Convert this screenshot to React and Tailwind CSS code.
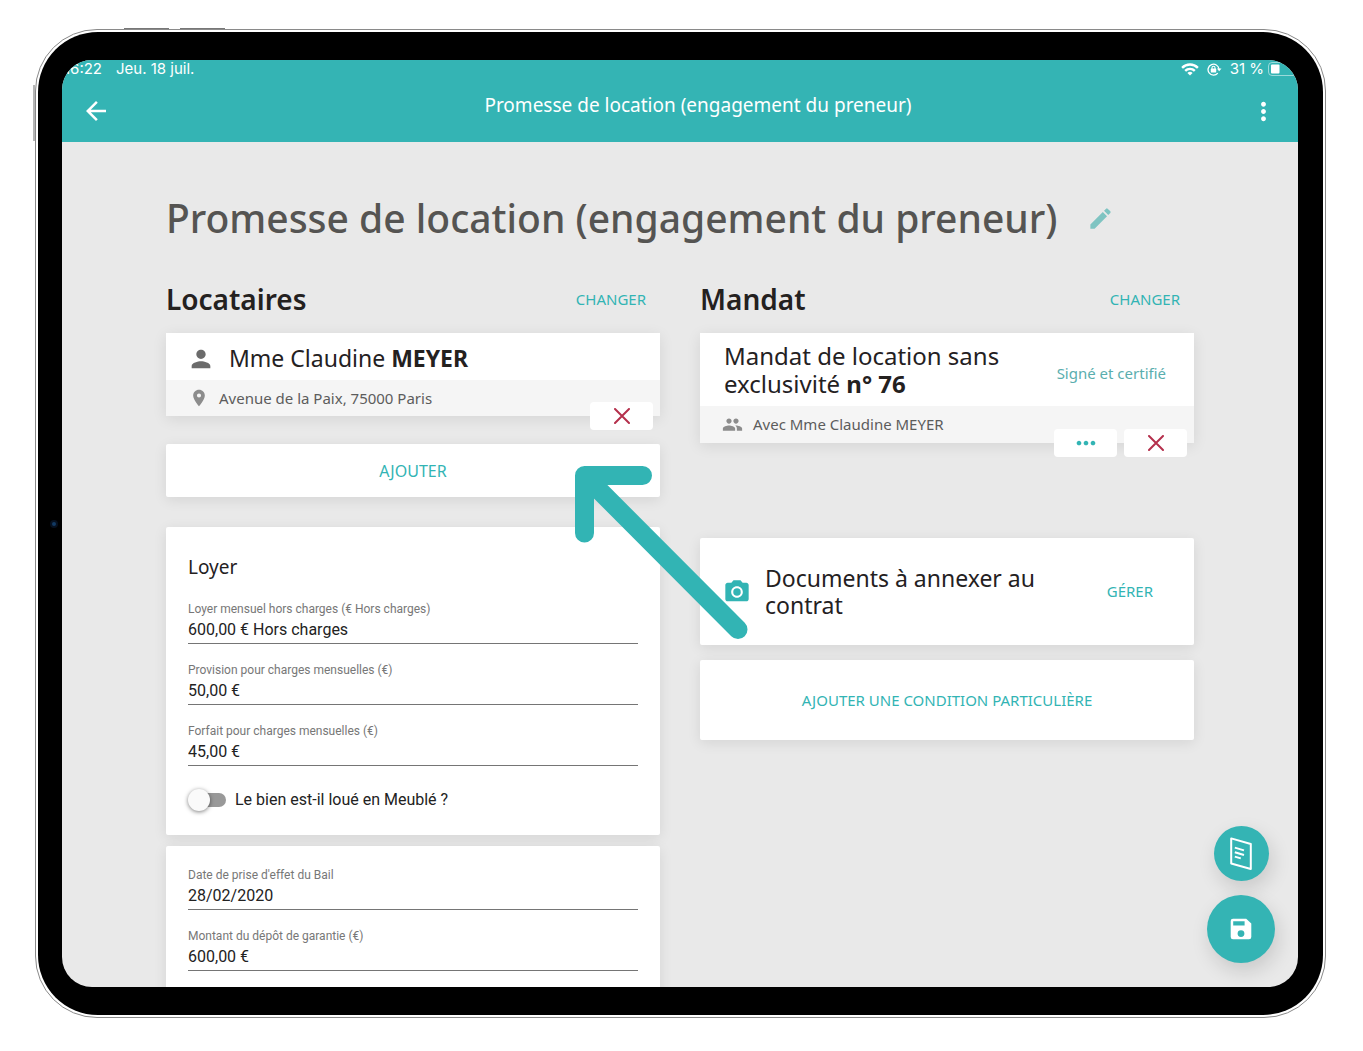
import React, { useState } from "react";
import {
  MdArrowBack,
  MdMoreVert,
  MdEdit,
  MdPerson,
  MdPlace,
  MdPeople,
  MdMoreHoriz,
  MdCameraAlt,
} from "react-icons/md";

const cardShadow = "shadow-[0_3px_14px_rgba(0,0,0,0.09)]";

function CrossIcon() {
  return (
    <svg width="16" height="16" viewBox="0 0 16 16" fill="none" stroke="#b5304c" strokeWidth="2" strokeLinecap="round" aria-hidden="true">
      <path d="M1 1 15 15M15 1 1 15" />
    </svg>
  );
}

function WifiIcon() {
  return (
    <svg width="18" height="13" viewBox="0 0 18 13" fill="none" stroke="#fff" strokeWidth="2.4" aria-hidden="true">
      <path d="M1.1 4.8a11.2 11.2 0 0 1 15.8 0" />
      <path d="M4.2 7.9a6.8 6.8 0 0 1 9.6 0" />
      <path d="M9 12.6 6.4 10a3.7 3.7 0 0 1 5.2 0Z" fill="#fff" stroke="none" />
    </svg>
  );
}

function RotationLockIcon() {
  return (
    <svg width="15" height="13" viewBox="0 0 15 13" fill="none" stroke="#fff" strokeWidth="1.3" aria-hidden="true">
      <path d="M10.8 10.2A5.5 5.5 0 1 1 12 6" />
      <path d="M9.9 5.4h4.6L12.2 8.2Z" fill="#fff" stroke="none" />
      <rect x="3.8" y="5.6" width="5.4" height="4" rx="0.6" fill="#fff" stroke="none" />
      <path d="M5 6V4.7a1.5 1.5 0 0 1 3 0V6" strokeWidth="1.1" />
    </svg>
  );
}

function BatteryIcon() {
  return (
    <svg width="30" height="14" viewBox="0 0 30 14" fill="none" aria-hidden="true">
      <rect x="0.5" y="0.5" width="28" height="13" rx="3.5" stroke="#fff" strokeOpacity="0.5" />
      <rect x="3" y="2.5" width="8.5" height="9" rx="1" fill="#fff" />
    </svg>
  );
}

function ContractIcon() {
  return (
    <svg width="22" height="34" viewBox="0 0 22 34" fill="none" stroke="#fff" strokeWidth="2" strokeLinejoin="round" aria-hidden="true">
      <path d="M1.2 1.4 20.8 7v25L1.2 26.5Z" />
      <path d="M4.8 10.6 14 13.4M4.8 15.2 14 18M4.8 19.6l6 1.8" />
    </svg>
  );
}

function SaveIcon() {
  return (
    <svg width="22" height="22" viewBox="0 0 22 22" fill="#fff" fillRule="evenodd" aria-hidden="true">
      <path d="M3 .7h13.2l5.1 4.8V19a2.3 2.3 0 0 1-2.3 2.3H3A2.3 2.3 0 0 1 .7 19V3A2.3 2.3 0 0 1 3 .7ZM3.2 3.2v4.4h11.4V3.2ZM11 12.2a3.4 3.4 0 1 0 0 6.8 3.4 3.4 0 0 0 0-6.8Z" />
    </svg>
  );
}

function PointerArrow() {
  return (
    <svg
      className="pointer-events-none absolute top-[22px] -right-[88px] z-20"
      width="173"
      height="174"
      viewBox="0 0 173 174"
      fill="none"
      stroke="#32b4b4"
      strokeWidth="19"
      strokeLinecap="round"
      strokeLinejoin="round"
      aria-hidden="true"
    >
      <path d="M67.5 9.5H9.5v57.5M9.5 9.5l153.5 154" />
    </svg>
  );
}

function StatusBar() {
  return (
    <div className="flex h-5 items-center justify-between text-[15px] leading-[18px]">
      <div className="flex gap-[14px] self-start pl-[2px]">
        <span>16:22</span>
        <span>Jeu. 18 juil.</span>
      </div>
      <div className="flex items-center self-start">
        <WifiIcon />
        <span className="ml-2 flex">
          <RotationLockIcon />
        </span>
        <span className="mr-1 ml-2">31 %</span>
        <BatteryIcon />
      </div>
    </div>
  );
}

function SectionHeading({ title }) {
  return (
    <div className="mb-[14px] flex h-10 items-center justify-between pr-[14px]">
      <h2 className="text-[28px] font-semibold text-[#24211f]">{title}</h2>
      <button type="button" className="text-[15px] text-[#32b4b4]">CHANGER</button>
    </div>
  );
}

function Field({ id, label, value }) {
  return (
    <div className="font-['Roboto',sans-serif]">
      <label htmlFor={id} className="block text-[12px] leading-4 text-[#777]">{label}</label>
      <input
        id={id}
        type="text"
        defaultValue={value}
        className="block h-[27px] w-full border-b border-[#757575] bg-transparent pb-[2px] text-[16px] text-[#222] outline-none"
      />
    </div>
  );
}

function FloatButton({ label, children }) {
  return (
    <button type="button" aria-label={label} className="flex h-7 w-[63px] items-center justify-center rounded bg-white">
      {children}
    </button>
  );
}

export default function App() {
  const [furnished, setFurnished] = useState(false);

  return (
    <div className="flex h-screen min-h-[600px] bg-white pt-[29px] pr-[37px] pb-[33px] pl-[35px] font-['Noto_Sans',sans-serif]">
      <div className="relative flex min-w-0 flex-1 rounded-[62px] border border-[#8a8a8a] bg-white p-[2px]">
        <span className="absolute -top-[2px] left-[88px] h-[1px] w-[45px] bg-[#777]" />
        <span className="absolute -top-[2px] left-[144px] h-[1px] w-[45px] bg-[#777]" />
        <span className="absolute top-[55px] -left-[3px] h-14 w-[2px] bg-[#b5b5b5]" />
        <div className="relative flex min-w-0 flex-1 rounded-[60px] bg-black pt-7 pr-[25px] pb-7 pl-6">
          <span className="absolute top-1/2 left-3 -mt-1 h-2 w-2 rounded-full border-2 border-[#06101f] bg-[#123a63]" />
          <div className="relative flex min-w-0 flex-1 flex-col overflow-hidden rounded-[30px] bg-[#e9e9e9]">
            <header className="h-[82px] shrink-0 bg-[#34b4b4] font-['Inter',sans-serif] text-white">
              <StatusBar />
              <div className="flex h-[62px] items-center pr-5 pl-[19px] font-['Noto_Sans',sans-serif]">
                <button type="button" aria-label="Retour"><MdArrowBack size={30} /></button>
                <p className="flex-1 pb-3 pl-9 text-center text-[19px]">Promesse de location (engagement du preneur)</p>
                <button type="button" aria-label="Plus d'options"><MdMoreVert size={29} /></button>
              </div>
            </header>

            <main className="min-h-0 flex-1 overflow-hidden px-[104px] pt-[52px]">
              <div className="flex items-center gap-[30px]">
                <h1 className="text-[39px] leading-[48px] font-medium whitespace-nowrap text-[#555452]">
                  Promesse de location (engagement du preneur)
                </h1>
                <button type="button" aria-label="Modifier le titre" className="text-[#7fc4c2]"><MdEdit size={27} /></button>
              </div>

              <div className="mt-[37px] grid grid-cols-2 gap-10">
                <div>
                  <SectionHeading title="Locataires" />
                  <section className={`relative bg-white ${cardShadow}`}>
                    <div className="flex h-[47px] items-center gap-[14px] pt-1 pl-[21px] text-[#24211f]">
                      <MdPerson size={28} className="text-[#6b6b6b]" />
                      <p className="text-[23px]">Mme Claudine <b>MEYER</b></p>
                    </div>
                    <div className="flex h-9 items-center gap-[10px] bg-[#f5f5f5] pl-[23px] text-[15px] text-[#5c5c5c]">
                      <MdPlace size={20} className="text-[#8c8c8c]" />
                      <p>Avenue de la Paix, 75000 Paris</p>
                    </div>
                    <div className="absolute right-[7px] -bottom-[14px]">
                      <FloatButton label="Retirer le locataire"><CrossIcon /></FloatButton>
                    </div>
                  </section>

                  <div className="relative mt-7">
                    <button type="button" className={`block h-[53px] w-full rounded-[2px] bg-white text-[16px] text-[#32b4b4] ${cardShadow}`}>
                      AJOUTER
                    </button>
                    <PointerArrow />
                  </div>

                  <section className={`mt-[30px] rounded-[2px] bg-white px-[22px] pt-[26px] pb-[23px] ${cardShadow}`}>
                    <h3 className="mb-5 text-[19px] leading-7 text-[#24211f]">Loyer</h3>
                    <div className="flex flex-col gap-[18px]">
                      <Field id="loyer" label="Loyer mensuel hors charges (€ Hors charges)" value="600,00 € Hors charges" />
                      <Field id="provision" label="Provision pour charges mensuelles (€)" value="50,00 €" />
                      <Field id="forfait" label="Forfait pour charges mensuelles (€)" value="45,00 €" />
                    </div>
                    <label className="mt-[22px] flex h-6 w-fit cursor-pointer items-center gap-[9px] font-['Roboto',sans-serif] text-[16px] text-[#222]">
                      <span className="relative flex h-[22px] w-[38px] items-center">
                        <input
                          type="checkbox"
                          role="switch"
                          checked={furnished}
                          onChange={(e) => setFurnished(e.target.checked)}
                          className="peer ml-[2px] h-[14px] w-9 cursor-pointer appearance-none rounded-full bg-[#999] checked:bg-[#8fd5d5]"
                        />
                        <span className="pointer-events-none absolute top-0 left-0 h-[22px] w-[22px] rounded-full bg-[#fafafa] shadow-[0_1px_4px_rgba(0,0,0,0.5)] peer-checked:left-4 peer-checked:bg-[#32b4b4]" />
                      </span>
                      Le bien est-il loué en Meublé ?
                    </label>
                  </section>

                  <section className={`mt-[11px] rounded-[2px] bg-white px-[22px] pt-[21px] pb-8 ${cardShadow}`}>
                    <div className="flex flex-col gap-[18px]">
                      <Field id="date" label="Date de prise d'effet du Bail" value="28/02/2020" />
                      <Field id="depot" label="Montant du dépôt de garantie (€)" value="600,00 €" />
                    </div>
                  </section>
                </div>

                <div>
                  <SectionHeading title="Mandat" />
                  <section className={`relative bg-white ${cardShadow}`}>
                    <div className="flex h-[73px] items-center justify-between pr-7 pl-6">
                      <p className="text-[24px] leading-7 text-[#24211f]">
                        Mandat de location sans<br />exclusivité <b>n° 76</b>
                      </p>
                      <p className="pt-2 text-[15px] text-[#5aaeae]">Signé et certifié</p>
                    </div>
                    <div className="flex h-[37px] items-center gap-[10px] bg-[#f5f5f5] pl-[22px] text-[15px] text-[#5c5c5c]">
                      <MdPeople size={21} className="text-[#8c8c8c]" />
                      <p>Avec Mme Claudine MEYER</p>
                    </div>
                    <div className="absolute right-[7px] -bottom-[14px] flex gap-[7px]">
                      <FloatButton label="Options du mandat"><MdMoreHoriz size={28} className="text-[#32b4b4]" /></FloatButton>
                      <FloatButton label="Retirer le mandat"><CrossIcon /></FloatButton>
                    </div>
                  </section>

                  <section className={`mt-[95px] flex h-[107px] items-center rounded-[2px] bg-white pr-[41px] pl-[23px] ${cardShadow}`}>
                    <MdCameraAlt size={28} className="shrink-0 text-[#32b4b4]" />
                    <p className="ml-[14px] flex-1 text-[23px] leading-[27px] text-[#24211f]">
                      Documents à annexer au<br />contrat
                    </p>
                    <button type="button" className="text-[15px] text-[#32b4b4]">GÉRER</button>
                  </section>

                  <button type="button" className={`mt-[15px] block h-20 w-full rounded-[2px] bg-white text-[15px] text-[#32b4b4] ${cardShadow}`}>
                    AJOUTER UNE CONDITION PARTICULIÈRE
                  </button>
                </div>
              </div>
            </main>

            <div className="absolute right-[23px] bottom-6 flex flex-col items-center gap-[14px]">
              <button type="button" aria-label="Voir le contrat" className="flex h-[55px] w-[55px] items-center justify-center rounded-full bg-[#34b4b4] shadow-[3px_8px_20px_rgba(0,0,0,0.14)]">
                <ContractIcon />
              </button>
              <button type="button" aria-label="Enregistrer" className="flex h-[68px] w-[68px] items-center justify-center rounded-full bg-[#34b4b4] shadow-[3px_8px_20px_rgba(0,0,0,0.14)]">
                <SaveIcon />
              </button>
            </div>
          </div>
        </div>
      </div>
    </div>
  );
}
